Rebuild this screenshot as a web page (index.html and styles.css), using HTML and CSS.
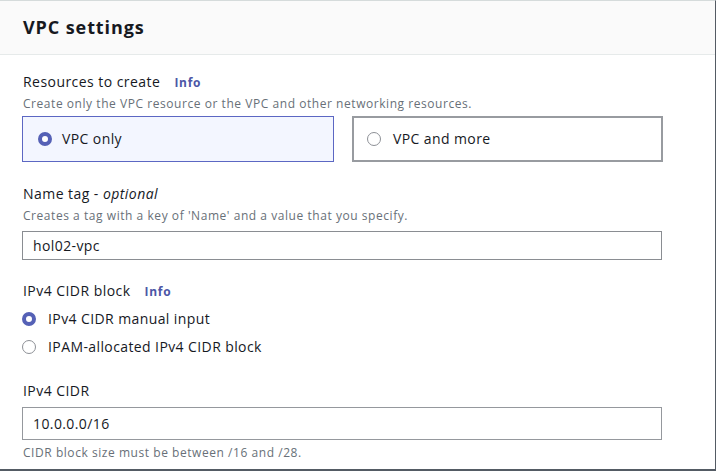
FILE: index.html
```html
<!DOCTYPE html>
<html lang="en">
<head>
<meta charset="utf-8">
<title>VPC settings</title>
<link rel="stylesheet" href="styles.css">
</head>
<body>
<div class="card">
  <div class="card-header">
    <h2 class="card-title">VPC settings</h2>
  </div>
  <div class="card-body">
    <div class="field field-first">
      <div class="label">Resources to create <a class="info" href="#">Info</a></div>
      <div class="desc">Create only the VPC resource or the VPC and other networking resources.</div>
      <div class="tiles">
        <div class="tile tile-selected">
          <span class="radio radio-checked"></span>
          <span class="tile-text">VPC only</span>
        </div>
        <div class="tile">
          <span class="radio"></span>
          <span class="tile-text">VPC and more</span>
        </div>
      </div>
    </div>

    <div class="field field-name">
      <div class="label">Name tag - <i>optional</i></div>
      <div class="desc">Creates a tag with a key of 'Name' and a value that you specify.</div>
      <div class="input input-name">hol02-vpc</div>
    </div>

    <div class="field field-block">
      <div class="label">IPv4 CIDR block <a class="info" href="#">Info</a></div>
      <div class="radio-group">
        <div class="radio-row"><span class="radio radio-checked"></span><span>IPv4 CIDR manual input</span></div>
        <div class="radio-row"><span class="radio"></span><span>IPAM-allocated IPv4 CIDR block</span></div>
      </div>
    </div>

    <div class="field field-cidr">
      <div class="label">IPv4 CIDR</div>
      <div class="input input-cidr">10.0.0.0/16</div>
      <div class="hint">CIDR block size must be between /16 and /28.</div>
    </div>
  </div>
</div>
</body>
</html>
```

FILE: styles.css
```css
* { box-sizing: border-box; }

html, body {
  margin: 0;
  padding: 0;
  background: #ffffff;
}

body {
  font-family: "Open Sans", "Noto Sans", Arial, sans-serif;
  color: #16191f;
  font-size: 14px;
  width: 716px;
  height: 471px;
  overflow: hidden;
}

.card {
  width: 716px;
  height: 471px;
  border-top: 1px solid #d5dbdb;
  border-right: 1px solid #545b64;
  border-bottom: 2px solid #545b64;
  display: flex;
  flex-direction: column;
}

.card-header {
  height: 54px;
  background: #fafafa;
  border-bottom: 1px solid #e6eaea;
  padding-left: 23px;
  display: flex;
  align-items: center;
  flex: none;
}

.card-title {
  margin: 0;
  margin-top: -2px;
  font-size: 18px;
  font-weight: 700;
  line-height: 24px;
  color: #16191f;
  letter-spacing: 0.9px;
}

.card-body {
  padding: 0 53px 0 22px;
  flex: 1;
}

.field { display: flex; flex-direction: column; }
.field-first { margin-top: 17px; }
.field-name { margin-top: 22px; }
.field-block { margin-top: 21px; }
.field-cidr { margin-top: 24px; }

.label {
  font-size: 14px;
  line-height: 20px;
  padding-left: 1px;
  color: #16191f;
  letter-spacing: 0.45px;
}

.label i { font-style: italic; }

.info {
  color: #4c56a6;
  font-weight: 700;
  font-size: 12px;
  text-decoration: none;
  margin-left: 10px;
  letter-spacing: 0.7px;
}

.desc, .hint {
  font-size: 12px;
  line-height: 16px;
  color: #687078;
  padding-left: 1px;
  margin-top: 3px;
  letter-spacing: 0.55px;
}

.field-name .desc { margin-top: 4px; }
.hint { margin-top: 5px; }

.tiles {
  display: grid;
  grid-template-columns: 312px 311px;
  column-gap: 18px;
  margin-top: 4px;
}

.tile {
  height: 46px;
  border: 2px solid #989ba0;
  display: flex;
  align-items: center;
  padding-left: 13px;
  gap: 12px;
  background: #ffffff;
}

.tile-selected {
  border: 1px solid #5c67c3;
  background: #f3f6ff;
  padding-left: 15px;
  gap: 10px;
}

.tile-text {
  font-size: 14px;
  line-height: 20px;
  letter-spacing: 0.4px;
}

.radio {
  width: 14px;
  height: 14px;
  border-radius: 50%;
  border: 1.5px solid #8d9096;
  background: #ffffff;
  flex: none;
  display: inline-block;
}

.radio-checked {
  border: 4px solid #5561b6;
}

.radio-group {
  display: flex;
  flex-direction: column;
  gap: 8px;
  margin-top: 7px;
}

.radio-row {
  display: flex;
  align-items: center;
  gap: 12px;
  line-height: 20px;
  font-size: 14px;
  letter-spacing: 0.4px;
}

.input {
  border: 1px solid #8a8d92;
  background: #ffffff;
  font-size: 14px;
  line-height: 20px;
  padding-left: 10px;
  display: flex;
  align-items: center;
  width: 640px;
  letter-spacing: 0.4px;
}

.input-name {
  height: 29px;
  margin-top: 7px;
}

.input-cidr {
  height: 33px;
  margin-top: 6px;
  border-width: 1.5px;
  border-color: #95989d;
}
```
